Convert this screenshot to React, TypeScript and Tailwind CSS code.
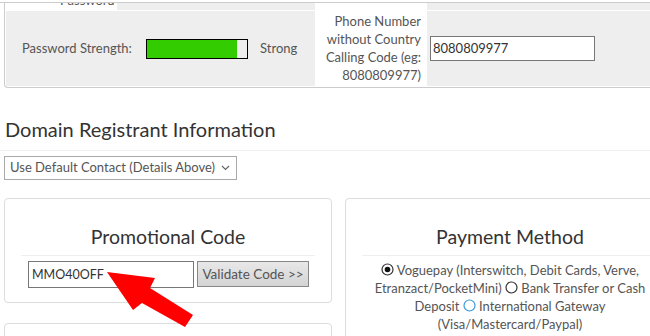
import React from "react";

const Radio = ({ checked, blue }: { checked?: boolean; blue?: boolean }) => (
  <svg width="13" height="13" viewBox="0 0 13 13" className="inline-block align-[-1px]">
    <circle cx="6.5" cy="6.5" r="5.5" fill="#fff" stroke={blue ? "#3399dd" : "#333"} strokeWidth="1.2" />
    {checked && <circle cx="6.5" cy="6.5" r="2.8" fill="#111" />}
  </svg>
);

export default function App() {
  return (
    <div className="relative w-[650px] h-[336px] overflow-hidden bg-white font-['Lato','Liberation_Sans',sans-serif] text-[#555]">
      {/* account table tail */}
      <div className="h-[2px]" />
      <div className="border-t border-[#ccc]" />
      <div className="ml-[4px] w-[700px] border-l border-b border-[#ccc] rounded-bl-[4px]">
        <div className="flex h-[7px] overflow-hidden">
          <div className="w-[112px] bg-white relative">
            <span className="absolute left-[55px] top-[-12px] text-[13px]">Password</span>
          </div>
          <div className="flex-1 bg-[#eeeeee]" />
        </div>
        <div className="flex h-[77px] border-t border-white">
          <div className="w-[309px] ml-[1px] mb-[1px] bg-[#eeeeee] flex items-center text-[13px]">
            <span className="ml-[16px] w-[124px]">Password Strength:</span>
            <div className="w-[102px] h-[20px] border border-black bg-[#eeeeee]">
              <div className="w-[90px] h-full bg-[#33cc00]" />
            </div>
            <span className="ml-[12px]">Strong</span>
          </div>
          <div className="w-[112px] -mt-[8px] bg-white text-right text-[13px] leading-[18px] pr-[6px] pt-[9px]">
            Phone Number
            <br />
            without Country
            <br />
            Calling Code (eg:
            <br />
            8080809977)
          </div>
          <div className="flex-1 mb-[1px] bg-[#eeeeee] flex items-center">
            <div className="ml-[3px] w-[165px] h-[25px] border border-[#777] bg-white text-[13px] text-[#333] pl-[2px] leading-[23px]">
              8080809977
            </div>
          </div>
        </div>
      </div>

      {/* domain registrant */}
      <div className="mt-[27px] pl-[5px] text-[20px] text-[#333] leading-[28px] pb-[7px] border-b border-[#eee]">
        Domain Registrant Information
      </div>
      <div className="ml-[4px] mt-[5px] w-[233px] h-[24px] border border-[#aaa] flex items-center justify-between pl-[5px] pr-[6px] text-[13px]">
        <span>Use Default Contact (Details Above)</span>
        <svg width="9" height="6" viewBox="0 0 9 6">
          <path d="M1 1l3.5 3.5L8 1" fill="none" stroke="#666" strokeWidth="1.2" />
        </svg>
      </div>

      <div className="flex mt-[18px] gap-[13px] ml-[4px]">
        <div className="w-[328px] shrink-0 flex flex-col gap-[20px]">
          <div className="h-[105px] border border-[#ddd] rounded-[4px] px-[16px]">
            <div className="mt-[24px] text-center text-[19.5px] text-[#333] leading-[28px] pb-[4px] border-b border-[#eee]">
              Promotional Code
            </div>
            <div className="flex mt-[5px] ml-[7px] gap-[3px]">
              <div className="w-[166px] h-[27px] border border-[#777] bg-white text-[12.5px] text-[#333] pl-[3px] leading-[25px]">
                MMO40OFF
              </div>
              <div className="w-[112px] h-[26px] border border-[#888] bg-gradient-to-b from-[#e8e8e8] to-[#d4d4d4] text-[13.5px] text-[#555] leading-[24px] text-center">
                Validate Code &gt;&gt;
              </div>
            </div>
          </div>
          <div className="h-[60px] border border-[#ddd] rounded-[4px]" />
        </div>
        <div className="w-[330px] shrink-0 h-[160px] border border-[#ddd] rounded-[4px] px-[16px]">
          <div className="mt-[24px] text-center text-[19.5px] text-[#333] leading-[28px] pb-[4px] border-b border-[#eee]">
            Payment Method
          </div>
          <div className="mt-[5px] text-center text-[13px] leading-[18px] -mx-[16px]">
            <Radio checked /> Voguepay (Interswitch, Debit Cards, Verve,
            <br />
            Etranzact/PocketMini) <Radio /> Bank Transfer or Cash
            <br />
            Deposit <Radio blue /> International Gateway
            <br />
            (Visa/Mastercard/Paypal)
          </div>
        </div>
      </div>

      {/* red arrow */}
      <svg className="absolute left-0 top-0 pointer-events-none" width="650" height="336" viewBox="0 0 650 336">
        <polygon points="107,272 155,278 150,288 193,315 185,327 142,303 133,310" fill="#ff0000" />
      </svg>
    </div>
  );
}
